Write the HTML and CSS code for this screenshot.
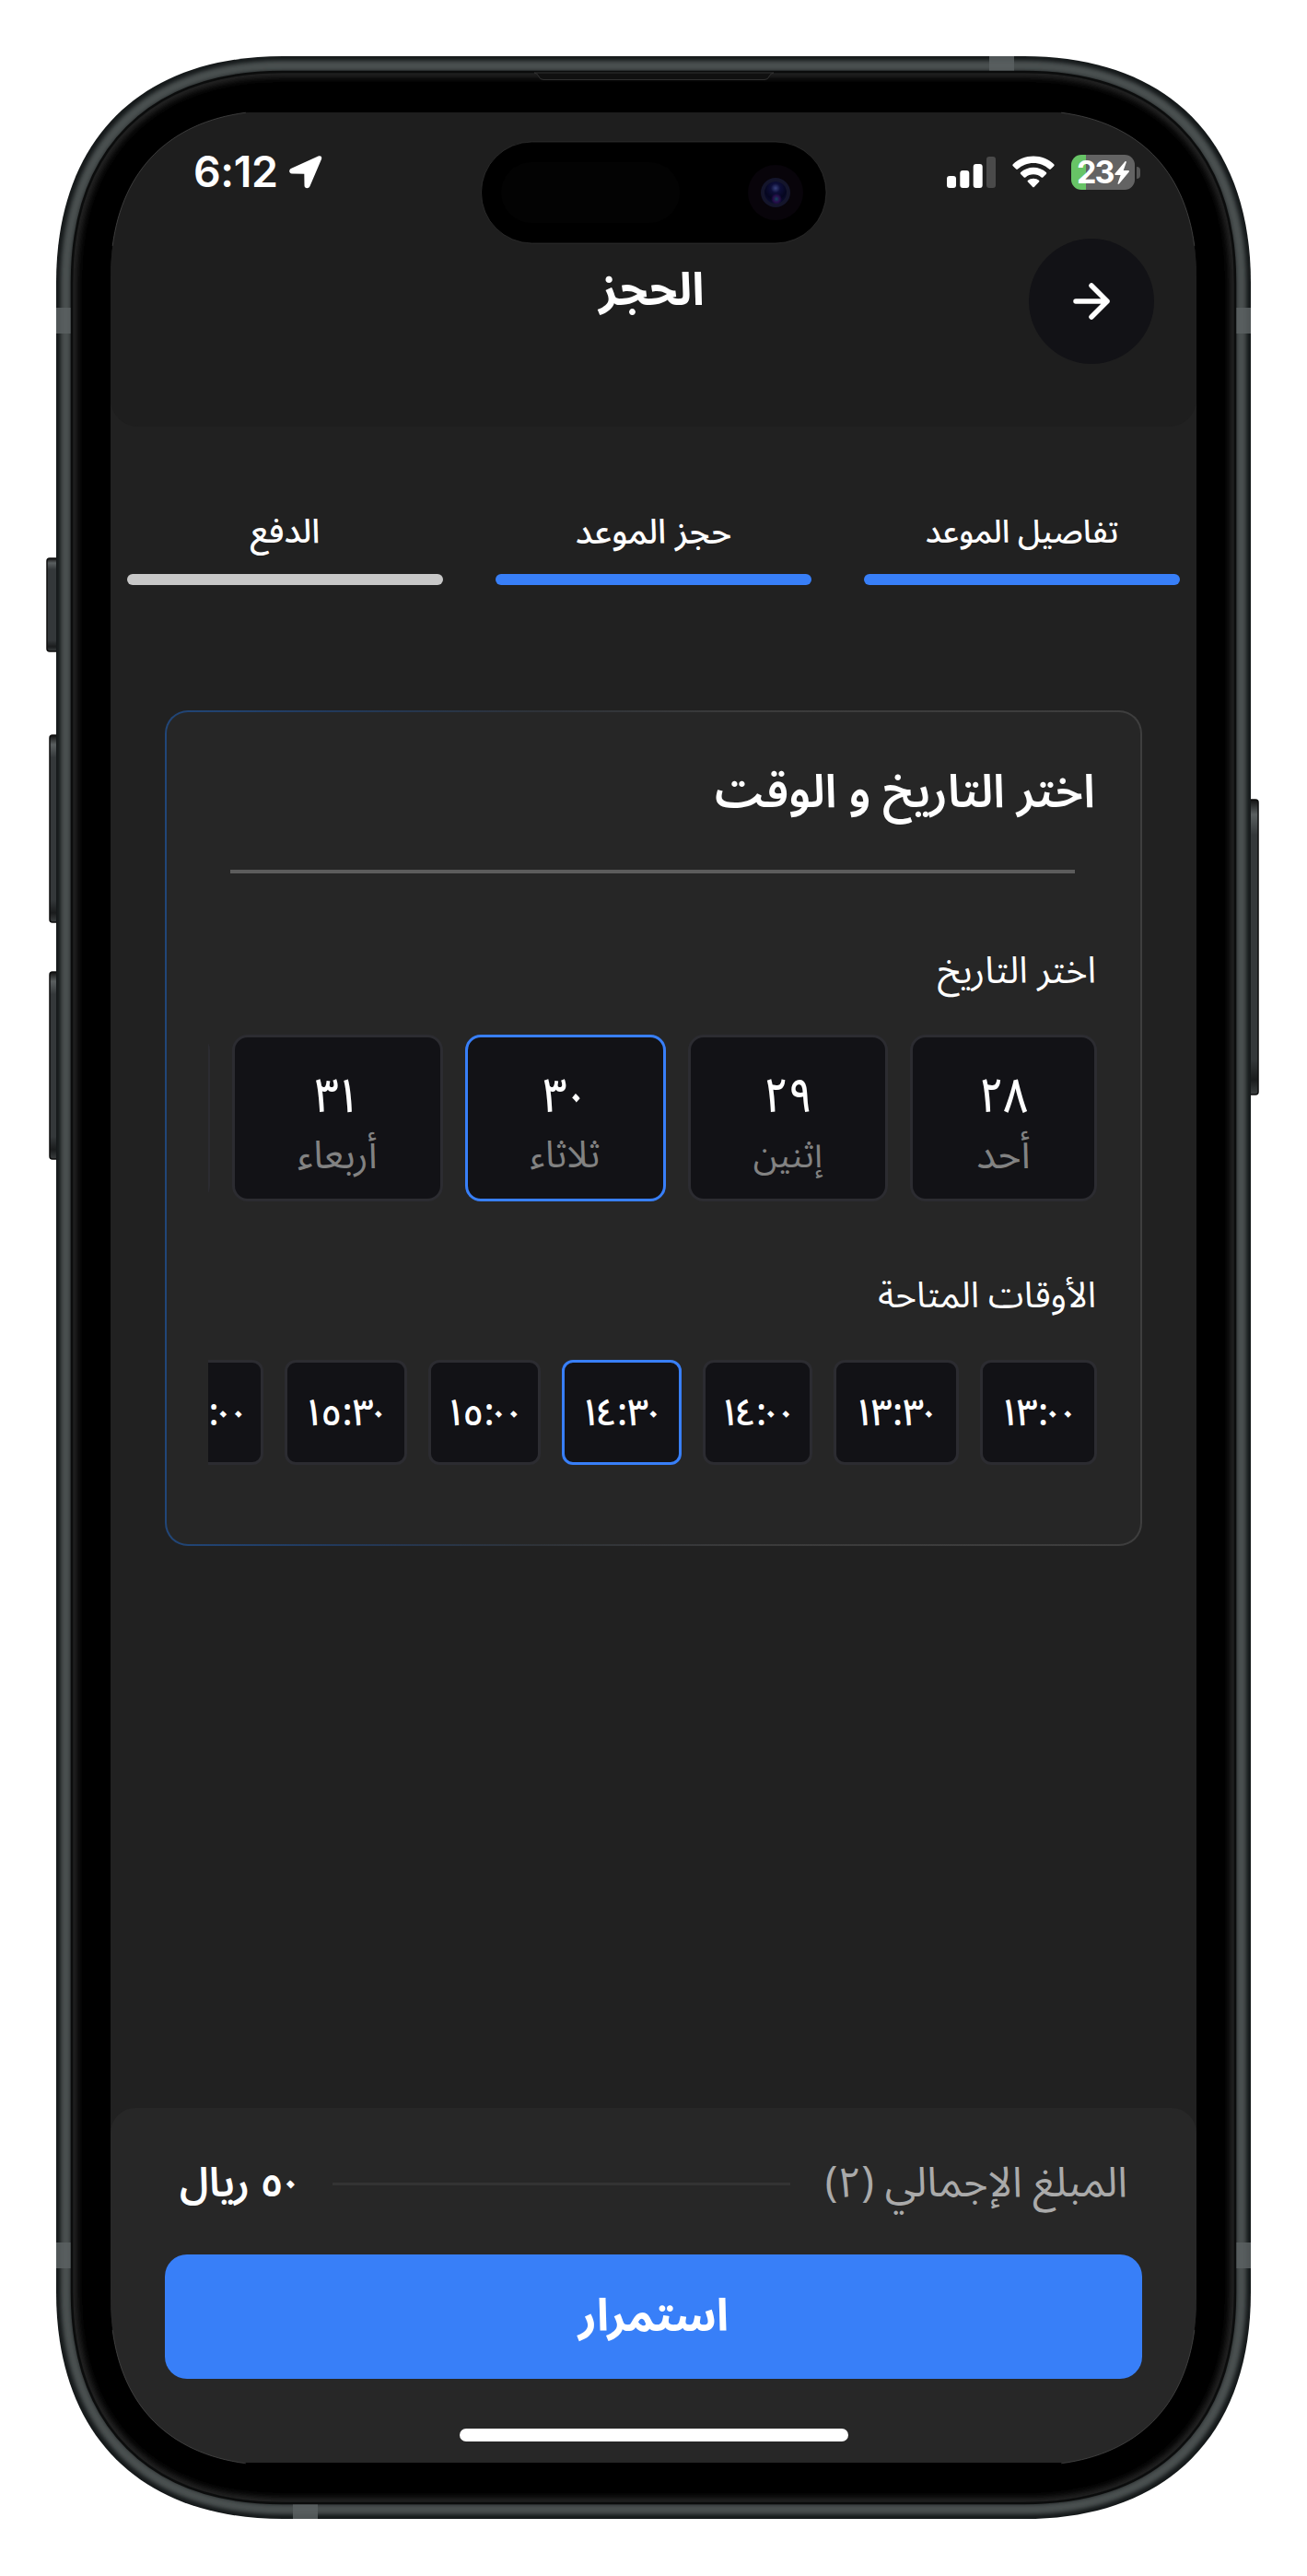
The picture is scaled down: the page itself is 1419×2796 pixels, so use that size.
FILE: index.html
```html
<!DOCTYPE html>
<html lang="ar" dir="rtl">
<head>
<meta charset="utf-8">
<title>الحجز</title>
<link rel="stylesheet" href="styles.css">
</head>
<body>
<div class="device">
  <svg class="chrome" viewBox="0 0 1419 2796" aria-hidden="true">
    <defs>
      <linearGradient id="key" x1="0" x2="0" y1="0" y2="1">
        <stop offset="0" stop-color="#111"/><stop offset=".05" stop-color="#5a5f60"/>
        <stop offset=".12" stop-color="#34383a"/><stop offset=".88" stop-color="#34383a"/>
        <stop offset=".95" stop-color="#1a1c1d"/><stop offset="1" stop-color="#3c4041"/>
      </linearGradient>
      <clipPath id="body"><path d="M61 307C61 152 152 61 307 61H1112C1267 61 1358 152 1358 307V2488C1358 2643 1267 2734 1112 2734H307C152 2734 61 2643 61 2488Z"/></clipPath>
      <clipPath id="glass"><path d="M79 307C79 163 163 79 307 79H1112C1256 79 1340 163 1340 307V2488C1340 2632 1256 2716 1112 2716H307C163 2716 79 2632 79 2488Z"/></clipPath>
      <filter id="soft" x="-5%" y="-5%" width="110%" height="110%"><feGaussianBlur stdDeviation="2"/></filter>
      <filter id="softer" x="-5%" y="-5%" width="110%" height="110%"><feGaussianBlur stdDeviation="4"/></filter>
    </defs>
    <g fill="url(#key)" stroke="#0c0d0d" stroke-width="1.5">
      <rect x="51" y="606" width="14" height="101" rx="3"/>
      <rect x="54" y="798" width="12" height="203" rx="3"/>
      <rect x="54" y="1055" width="12" height="203" rx="3"/>
      <rect x="1354" y="868" width="12" height="320" rx="3"/>
    </g>
    <g clip-path="url(#body)">
      <rect width="1419" height="2796" fill="#15191a"/>
      <path filter="url(#soft)" fill="none" stroke="#4a4f50" stroke-width="11" d="M71.500 307C71.500 159 159 71.500 307 71.500H1112C1260 71.500 1347.500 159 1347.500 307V2488C1347.500 2636 1260 2723.500 1112 2723.500H307C159 2723.500 71.500 2636 71.500 2488Z"/>
      <g fill="#5a6061" opacity=".85">
        <rect x="61" y="334" width="17" height="28"/><rect x="1341" y="334" width="17" height="28"/>
        <rect x="61" y="2434" width="17" height="28"/><rect x="1341" y="2434" width="17" height="28"/>
        <rect x="1074" y="61" width="27" height="17"/><rect x="318" y="2718" width="27" height="17"/>
      </g>
    </g>
    <g clip-path="url(#glass)">
      <rect x="70" y="70" width="1280" height="2656"/>
      <path filter="url(#softer)" fill="none" stroke="#3c3c3c" stroke-width="6" d="M79 307C79 163 163 79 307 79H1112C1256 79 1340 163 1340 307V2488C1340 2632 1256 2716 1112 2716H307C163 2716 79 2632 79 2488Z"/>
    </g>
    <path fill="none" stroke="#0b0c0c" stroke-width="2.500" d="M78 307C78 162 162 78 307 78H1112C1257 78 1341 162 1341 307V2488C1341 2633 1257 2717 1112 2717H307C162 2717 78 2633 78 2488Z"/>
    <path fill="#101010" stroke="#303030" d="M580 79Q583 79 585 83Q586 86.500 590 86.500H830Q834 86.500 835 83Q837 79 840 79Z"/>
  </svg>

  <main class="screen">
    <header class="header">
      <div class="status">
        <div class="status__side">
          <span class="status__time">6:12</span>
          <svg class="status__loc" viewBox="0 0 36 36"><path fill="#fff" d="M31.500 .6C34.200 -.6 36 1.200 34.900 3.900L22.400 33.300C21.200 36 16.600 35.800 16.500 32.500L16.300 19.700L3 19.500C-.5 19.400 -.8 15 2.300 13.700Z"/></svg>
        </div>
        <div class="status__side">
          <svg class="status__signal" viewBox="0 0 53 34"><g fill="#fff"><rect y="21" width="10" height="13" rx="3"/><rect x="14.300" y="15" width="10" height="19" rx="3"/><rect x="28.700" y="8" width="10" height="26" rx="3"/></g><rect x="43" width="10" height="34" rx="3" fill="#4a4a4a"/></svg>
          <svg class="status__wifi" viewBox="0 0 46 36"><g fill="#fff"><path d="M23 0.500C31.500 .5 39.500 3.700 45.200 9.300C45.800 9.900 45.800 10.600 45.200 11.200L41.800 14.600C41.300 15.100 40.600 15.100 40.100 14.600C35.500 10.300 29.500 7.900 23 7.900S10.500 10.300 5.900 14.600C5.400 15.100 4.700 15.100 4.200 14.600L.8 11.200C.2 10.600 .2 9.900 .8 9.300C6.500 3.700 14.500 .5 23 .5Z"/><path d="M23 12.700C28.200 12.700 33.100 14.700 36.800 18.100C37.400 18.700 37.400 19.400 36.800 20L33.300 23.400C32.800 23.900 32.200 23.900 31.600 23.400C29.200 21.400 26.300 20.200 23 20.200S16.800 21.400 14.400 23.400C13.800 23.900 13.200 23.900 12.700 23.400L9.200 20C8.600 19.400 8.600 18.700 9.200 18.100C12.900 14.700 17.800 12.700 23 12.700Z"/><path d="M23 24.800C25.300 24.800 27.400 25.500 29 26.800C29.600 27.300 29.600 28 29 28.600L24 33.800C23.400 34.500 22.600 34.500 22 33.800L17 28.600C16.400 28 16.400 27.300 17 26.800C18.600 25.500 20.700 24.800 23 24.800Z"/></g></svg>
          <div class="battery">
            <div class="battery__cell">
              <span class="battery__level">23</span>
              <svg viewBox="0 0 16 25"><path fill="#fff" d="M11.500 .3C12.300 -.3 13.200 .3 12.800 1.300L9.700 10H15C16 10 16.300 10.900 15.600 11.700L5 24.500C4.200 25.300 3.200 24.700 3.600 23.700L6.600 15H1.200C.2 15 -.1 14 .6 13.200Z"/></svg>
            </div>
            <div class="battery__tip"></div>
          </div>
        </div>
      </div>
      <div class="nav">
        <button class="nav__back" aria-label="رجوع"><svg viewBox="0 0 40 40"><path fill="none" stroke="#fff" stroke-width="5.500" stroke-linecap="round" stroke-linejoin="round" d="M3 20H37M20 3L37 20L20 37"/></svg></button>
        <h1 class="nav__title">الحجز</h1>
      </div>
    </header>

    <ol class="steps">
      <li class="step step--details">تفاصيل الموعد</li>
      <li class="step step--booking">حجز الموعد</li>
      <li class="step step--payment">الدفع</li>
    </ol>

    <section class="card">
      <h2 class="card__title">اختر التاريخ و الوقت</h2>
      <hr class="card__rule">
      <h3 class="label">اختر التاريخ</h3>
      <div class="dates">
        <div class="tile date"><b>٢٨</b><span class="date__sun">أحد</span></div>
        <div class="tile date"><b>٢٩</b><span class="date__mon">إثنين</span></div>
        <div class="tile tile--on date"><b>٣<i>٠</i></b><span>ثلاثاء</span></div>
        <div class="tile date"><b>٣<i>١</i></b><span class="date__wed">أربعاء</span></div>
        <div class="tile date"></div>
      </div>
      <h3 class="label label--times">الأوقات المتاحة</h3>
      <div class="times">
        <div class="tile time">١<i class="three">٣</i>:<i>٠</i><i>٠</i></div>
        <div class="tile time">١<i class="three">٣</i>:٣<i>٠</i></div>
        <div class="tile time">١<i class="four">٤</i>:<i>٠</i><i>٠</i></div>
        <div class="tile tile--on time">١<i class="four">٤</i>:٣<i>٠</i></div>
        <div class="tile time">١<i class="five">٥</i>:<i>٠</i><i>٠</i></div>
        <div class="tile time">١<i class="five">٥</i>:٣<i>٠</i></div>
        <div class="tile time">١٦:<i>٠</i><i>٠</i></div>
      </div>
    </section>

    <footer class="footer">
      <div class="total">
        <span class="total__label">المبلغ الإجمالي (٢)</span>
        <span class="total__line"></span>
        <strong class="total__price"><span class="total__num">٥<i>٠</i></span> ريال</strong>
      </div>
      <button class="cta">استمرار</button>
      <div class="home"></div>
    </footer>
  </main>

  <svg class="chrome" viewBox="0 0 1419 2796" aria-hidden="true">
    <defs>
      <radialGradient id="lens" cx=".5" cy=".3" r=".7"><stop offset="0" stop-color="#39427c"/><stop offset=".3" stop-color="#0d0e38"/><stop offset=".7" stop-color="#05061f"/><stop offset="1" stop-color="#0b0d30"/></radialGradient>
      <radialGradient id="flare"><stop offset="0" stop-color="#0f4a5c"/><stop offset=".6" stop-color="#35105a" stop-opacity=".7"/><stop offset="1" stop-color="#35105a" stop-opacity="0"/></radialGradient>
    </defs>
    <g fill="none" stroke="#4c4c4c" stroke-width=".7" stroke-dasharray="0 12 76 12">
      <path pathLength="100" d="M120 302C120 186 186 120 302 120"/>
      <path pathLength="100" d="M1117 120C1233 120 1299 186 1299 302"/>
      <path pathLength="100" d="M1299 2494C1299 2610 1233 2676 1117 2676"/>
      <path pathLength="100" d="M302 2676C186 2676 120 2610 120 2494"/>
    </g>
    <rect x="522.500" y="154" width="374.500" height="110" rx="55" stroke="#3a3a3a" stroke-width=".6"/>
    <rect x="544" y="176" width="194" height="66" rx="33" fill="#030303"/>
    <circle cx="842" cy="209" r="30" fill="#08040a"/>
    <circle cx="842" cy="209" r="16" fill="#14152b"/>
    <circle cx="842" cy="209" r="12" fill="url(#lens)"/>
    <circle cx="843" cy="216" r="6" fill="url(#flare)"/>
  </svg>
</div>
</body>
</html>
```
FILE: styles.css
```css
* { box-sizing: border-box; margin: 0; padding: 0; }

body {
  background: #fff;
  color: #fff;
  font-family: "Noto Sans Arabic", "Noto Sans", "DejaVu Sans", sans-serif;
}

button { border: 0; color: inherit; font-family: inherit; }

/* Digits that sit tighter than their default advance */
i { font-style: normal; }

.device {
  position: relative;
  width: 1419px;
  height: 2796px;
  padding: 122px 120px 123px;
  overflow: hidden;
}

.chrome {
  position: absolute;
  inset: 0;
  width: 1419px;
  height: 2796px;
  pointer-events: none;
}

.screen {
  position: relative;
  display: flex;
  flex-direction: column;
  height: 2551px;
  background: #212121;
  clip-path: path("M0 180C0 64 66 -2 182 -2H997C1113 -2 1179 64 1179 180V2372C1179 2488 1113 2554 997 2554H182C66 2554 0 2488 0 2372Z");
}

/* Header */
.header {
  height: 341px;
  background: #1e1e1e;
  border-radius: 0 0 30px 30px;
}

.status {
  direction: ltr;
  display: flex;
  align-items: center;
  justify-content: space-between;
  height: 130px;
  padding: 0 61px 0 90px;
  font-family: "Inter", sans-serif;
}

.status__side { display: flex; align-items: center; }

.status__time {
  width: 93px;
  padding-bottom: 2px;
  font-size: 46.5px;
  font-weight: 580;
  line-height: 54px;
  letter-spacing: -.4px;
}

.status__loc { width: 36px; height: 36px; margin-left: 11px; }
.status__signal { width: 53px; height: 34px; margin-right: 18px; }
.status__wifi { width: 46px; height: 36px; margin-right: 18px; }

.battery { display: flex; align-items: center; gap: 2px; }

.battery__cell {
  display: flex;
  align-items: center;
  width: 69px;
  height: 38px;
  padding-left: 6px;
  border-radius: 11px;
  background: linear-gradient(90deg, #67c466 16px, #636363 16px);
  font-size: 34px;
  font-weight: 700;
  line-height: 38px;
}

.battery__level { width: 41px; letter-spacing: -2px; }
.battery__cell svg { width: 16px; height: 25px; }

.battery__tip {
  width: 4px;
  height: 13px;
  border-radius: 0 4px 4px 0;
  background: #555;
}

.nav {
  display: grid;
  grid-template-columns: 136px 1fr 136px;
  align-items: center;
  height: 150px;
  padding: 0 46px;
}

.nav__back {
  display: flex;
  align-items: center;
  justify-content: center;
  width: 136px;
  height: 136px;
  border-radius: 50%;
  background: #121216;
}

.nav__back svg { width: 40px; height: 40px; }

.nav__title {
  padding: 0 4px 22px 0;
  font-size: 49px;
  font-weight: 700;
  line-height: 80px;
  text-align: center;
}

/* Progress steps */
.steps {
  display: grid;
  grid-template-columns: repeat(3, 1fr);
  gap: 57px;
  padding: 85px 18px 0;
  list-style: none;
}

.step {
  font-size: 36.5px;
  font-weight: 530;
  line-height: 60px;
  text-align: center;
}

.step::after {
  content: "";
  display: block;
  height: 12px;
  margin-top: 15px;
  border-radius: 6px;
  background: #387ff8;
}

.step--details { font-size: 34.4px; }
.step--booking { font-size: 37px; }
.step--payment::after { background: #c8c8c8; }

/* Booking card */
.card {
  height: 907px;
  margin: 136px 59px 0;
  padding: 47px 47px 0 45px;
  border: 2px solid transparent;
  border-radius: 25px;
  background:
    linear-gradient(#262626, #262626) padding-box,
    linear-gradient(90deg, #214678, #22395a 18%, #2e3238 38%, #3b3b3b 60%, #3e3e3e) border-box;
}

.card__title {
  padding-right: 2px;
  font-size: 50px;
  font-weight: 600;
  line-height: 80px;
}

.card__rule {
  height: 4px;
  margin: 44px 24px 0;
  border: 0;
  background: #5c5c5c;
}

.label {
  margin-top: 77px;
  padding-right: 1px;
  font-size: 40px;
  font-weight: 400;
  line-height: 60px;
}

.label--times { margin-top: 73px; font-size: 39px; }

.dates, .times {
  display: grid;
  overflow: hidden;
}

.dates {
  grid-template-columns: 203px 217.5px 218px 228.5px 220px;
  gap: 24px;
  height: 181px;
  margin-top: 38px;
}

.times {
  grid-template-columns: 127px 136px 119px 130px 122px 133px 122px;
  gap: 23px;
  height: 114px;
  margin-top: 39px;
}

.tile {
  border: 3px solid #2c2c31;
  border-radius: 17px;
  background: #121216;
  text-align: center;
}

.tile--on { border-color: #387ff8; }

.date {
  display: flex;
  flex-direction: column;
  padding-top: 33px;
  line-height: 64px;
}

.date b {
  direction: ltr;
  font-size: 52px;
  font-weight: 550;
  transform: scaleX(.88);
}

.date i { margin-left: -4px; }
.date span { color: #828282; font-size: 40px; }
.date span.date__sun { font-size: 43px; }
.date span.date__mon { font-size: 38px; }
.date span.date__wed { font-size: 42px; }

.time {
  direction: ltr;
  padding-top: 2px;
  border-radius: 12px;
  font-size: 41px;
  font-weight: 480;
  line-height: 106px;
  white-space: nowrap;
}

.time i { margin-left: -7px; }
.time i.three { margin-left: -4px; }
.time i.four { margin-left: -6px; }
.time i.five { margin-left: -4px; }

/* Checkout bar */
.footer {
  height: 385px;
  margin-top: auto;
  padding: 42px 59px 0;
  border-radius: 27px 27px 0 0;
  background: #272727;
}

.total {
  display: flex;
  align-items: center;
  height: 80px;
  padding: 0 16px;
  gap: 38px;
  line-height: 80px;
}

.total__label { color: #aaa; font-size: 45.5px; }
.total__line { flex: 1; height: 3px; background: #333; }
.total__price { font-size: 44px; font-weight: 650; }
.total__num { display: inline-block; direction: ltr; }
.total__num i { margin: 0 -5px 0 -5px; }

.cta {
  display: block;
  width: 100%;
  height: 135px;
  margin-top: 37px;
  border-radius: 24px;
  background: #387ff8;
  font-size: 48.5px;
  font-weight: 670;
  line-height: 135px;
}

.home {
  width: 422px;
  height: 14px;
  margin: 54px auto 0;
  border-radius: 7px;
  background: #fff;
}
```
